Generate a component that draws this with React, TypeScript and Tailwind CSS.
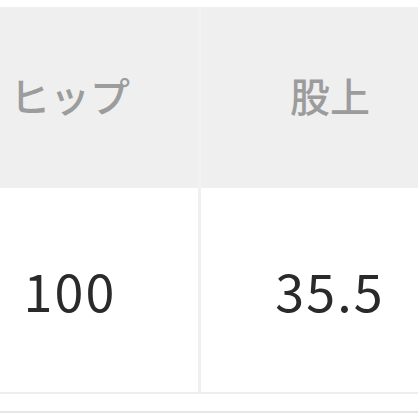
import React from 'react';

const font = { fontFamily: '"Noto Sans CJK JP", "Noto Sans", sans-serif' };

export default function App() {
  return (
    <div className="w-[418px] h-[418px] overflow-hidden bg-white" style={font}>
      <div className="ml-[-58px] w-[520px] pt-[7px]">
        {/* header row */}
        <div className="flex gap-[3px] bg-[#f2f2f2]">
          <div className="w-[256px] h-[181px] bg-[#efefef] flex items-center justify-center text-[40px] font-medium text-[#9c9c9c] pb-[6px]">
            ヒップ
          </div>
          <div className="w-[258px] h-[181px] bg-[#efefef] flex items-center justify-center text-[40px] font-medium text-[#9c9c9c] pb-[6px]">
            股上
          </div>
        </div>
        {/* body row */}
        <div className="flex gap-[3px] bg-[#efefef] border-b-2 border-[#eeeeee]">
          <div className="w-[256px] h-[204px] bg-white flex items-center justify-center text-[52px] tracking-[0.04em] text-[#2a2a2a]">
            100
          </div>
          <div className="w-[258px] h-[204px] bg-white flex items-center justify-center text-[52px] tracking-[0.04em] text-[#2a2a2a]">
            35.5
          </div>
        </div>
        <div className="h-[19px] bg-white border-b-2 border-[#e6e6e6]" />
      </div>
    </div>
  );
}
